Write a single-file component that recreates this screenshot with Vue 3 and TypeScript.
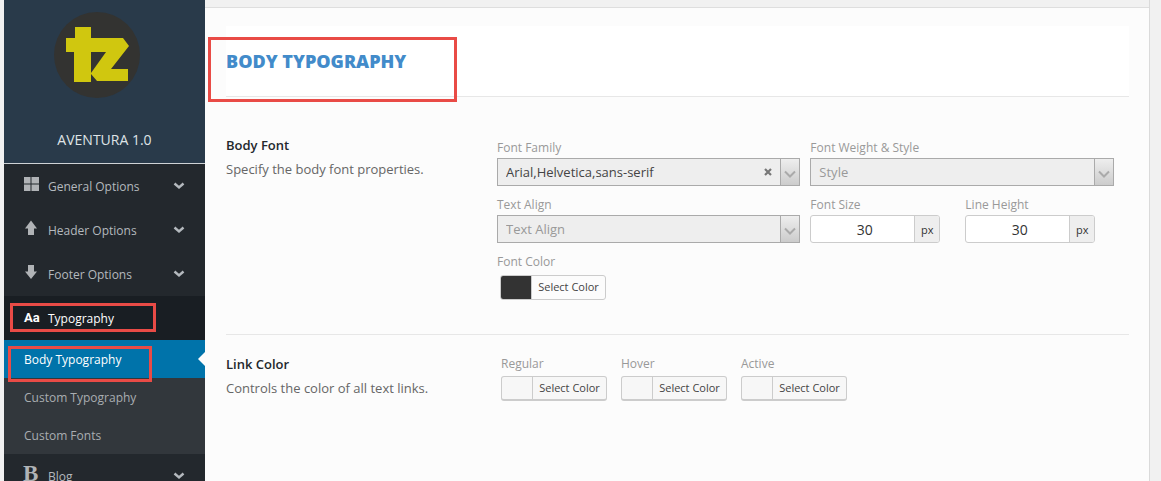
<script setup lang="ts">
import { ref } from 'vue'

interface MenuItem {
  label: string
  icon: 'grid' | 'up' | 'down' | 'type' | 'bold'
  active?: boolean
  children?: string[]
}

const menu: MenuItem[] = [
  { label: 'General Options', icon: 'grid' },
  { label: 'Header Options', icon: 'up' },
  { label: 'Footer Options', icon: 'down' },
  {
    label: 'Typography',
    icon: 'type',
    active: true,
    children: ['Body Typography', 'Custom Typography', 'Custom Fonts'],
  },
  { label: 'Blog', icon: 'bold' },
]

const currentPage = 'Body Typography'
const linkStates = ['Regular', 'Hover', 'Active']

const family = ref('Arial,Helvetica,sans-serif')
const weight = ref('')
const align = ref('')
const fontSize = ref('30')
const lineHeight = ref('30')
</script>

<template>
  <div class="page">
    <aside class="sidebar">
      <div class="brand">
        <svg class="logo" viewBox="0 0 86 86" aria-hidden="true">
          <circle cx="43" cy="43" r="43" fill="#333331" />
          <path
            fill="#d0c70f"
            d="M21 15H37V26H69L75 34L57 57H74V69H43L37 62V70H20V40H12V26H21Z"
          />
          <path fill="#333331" d="M37 40H52L37 61Z" />
        </svg>
        <span class="brand-name">AVENTURA 1.0</span>
      </div>
      <nav>
        <ul class="menu">
          <li v-for="item in menu" :key="item.label">
            <a href="#" class="menu-link" :class="{ active: item.active }">
              <span v-if="item.active" class="marker marker-menu"></span>
              <svg class="menu-icon" viewBox="0 0 16 16" aria-hidden="true">
                <path
                  v-if="item.icon === 'grid'"
                  d="M1 1h6.500v6.500H1zM8.500 1H16v6.500H8.500zM1 8.500h6.500V15H1zM8.500 8.500H16V15H8.500z"
                />
                <path v-else-if="item.icon === 'up'" d="M8 0.500L14 8.500H11V15H5V8.500H2Z" />
                <path v-else-if="item.icon === 'down'" d="M8 15L14 7.500H11V1H5V7.500H2Z" />
                <text v-else-if="item.icon === 'type'" class="glyph-type" x="1" y="14">Aa</text>
                <text v-else class="glyph-bold" x="0" y="15">B</text>
              </svg>
              <span class="menu-label">{{ item.label }}</span>
              <svg v-if="!item.active" class="caret" viewBox="0 0 12 8" aria-hidden="true">
                <path d="M1.500 1.500L6 5.500L10.500 1.500" />
              </svg>
            </a>
            <ul v-if="item.children" class="submenu">
              <li v-for="child in item.children" :key="child">
                <a href="#" class="sub-link" :class="{ current: child === currentPage }">
                  <span v-if="child === currentPage" class="marker marker-sub"></span>
                  {{ child }}
                </a>
              </li>
            </ul>
          </li>
        </ul>
      </nav>
    </aside>

    <div class="main">
      <div class="topbar"></div>
      <main class="panel">
        <header class="section-head">
          <span class="marker marker-head"></span>
          <h2>Body Typography</h2>
        </header>

        <section class="row">
          <div class="about">
            <h3>Body Font</h3>
            <p>Specify the body font properties.</p>
          </div>
          <div class="fields">
            <div class="field half">
              <label for="family">Font Family</label>
              <div class="select">
                <select id="family" v-model="family">
                  <option value=""></option>
                  <option>Arial,Helvetica,sans-serif</option>
                </select>
                <button type="button" class="clear" aria-label="Clear font family" @click="family = ''">
                  <svg viewBox="0 0 8 8"><path d="M1 1L7 7M7 1L1 7" /></svg>
                </button>
                <span class="arrow">
                  <svg viewBox="0 0 12 8"><path d="M1 1.500L6 6.500L11 1.500" /></svg>
                </span>
              </div>
            </div>
            <div class="field half">
              <label for="weight">Font Weight &amp; Style</label>
              <div class="select">
                <select id="weight" v-model="weight" :class="{ empty: !weight }">
                  <option value="">Style</option>
                  <option>Normal 400</option>
                  <option>Bold 700</option>
                </select>
                <span class="arrow">
                  <svg viewBox="0 0 12 8"><path d="M1 1.500L6 6.500L11 1.500" /></svg>
                </span>
              </div>
            </div>
            <div class="field half">
              <label for="align">Text Align</label>
              <div class="select">
                <select id="align" v-model="align" :class="{ empty: !align }">
                  <option value="">Text Align</option>
                  <option>Left</option>
                  <option>Center</option>
                  <option>Right</option>
                </select>
                <span class="arrow">
                  <svg viewBox="0 0 12 8"><path d="M1 1.500L6 6.500L11 1.500" /></svg>
                </span>
              </div>
            </div>
            <div class="half sizes">
              <div class="field">
                <label for="size">Font Size</label>
                <div class="measure">
                  <input id="size" v-model="fontSize" type="text" inputmode="numeric" />
                  <span class="unit">px</span>
                </div>
              </div>
              <div class="field">
                <label for="line">Line Height</label>
                <div class="measure">
                  <input id="line" v-model="lineHeight" type="text" inputmode="numeric" />
                  <span class="unit">px</span>
                </div>
              </div>
            </div>
            <div class="field half">
              <label for="font-color">Font Color</label>
              <button id="font-color" type="button" class="color filled">
                <span class="swatch"></span><span class="color-text">Select Color</span>
              </button>
            </div>
          </div>
        </section>

        <section class="row links">
          <div class="about">
            <h3>Link Color</h3>
            <p>Controls the color of all text links.</p>
          </div>
          <div class="states">
            <div v-for="state in linkStates" :key="state" class="field">
              <label :for="'link-' + state">{{ state }}</label>
              <button :id="'link-' + state" type="button" class="color">
                <span class="swatch"></span><span class="color-text">Select Color</span>
              </button>
            </div>
          </div>
        </section>
      </main>
    </div>
  </div>
</template>

<style>
body {
  margin: 0;
  background: #f1f1f1;
}
</style>

<style scoped>
* {
  box-sizing: border-box;
}
.page {
  display: flex;
  height: 100vh;
  padding: 0 11px 0 4px;
  overflow: hidden;
  background: #f1f1f1;
  font-family: "Open Sans", "Noto Sans", sans-serif;
  font-size: 13px;
  line-height: 20px;
}
.sidebar {
  flex: 0 0 201px;
  background: #23282d;
}
.brand {
  display: flex;
  flex-direction: column;
  align-items: center;
  height: 164px;
  padding-top: 12px;
  border-bottom: 1px solid #cfd3d6;
  background: #293a4a;
  color: #dfe3e6;
  font-size: 14px;
}
.logo {
  width: 86px;
  height: 86px;
  margin-right: 16px;
}
.brand-name {
  margin-top: 32px;
}
.menu,
.submenu {
  margin: 0;
  padding: 0;
  list-style: none;
}
.menu {
  font-size: 12px;
}
.menu-link {
  position: relative;
  display: flex;
  align-items: center;
  height: 44px;
  padding: 0 20px 0 19px;
  color: #b4b9be;
  text-decoration: none;
}
.menu-link.active {
  background: #191e23;
  color: #fff;
}
.menu-icon {
  width: 16px;
  height: 16px;
  margin: 0 9px 4px 0;
  fill: #b0b3b6;
  overflow: visible;
}
.active .menu-icon {
  fill: #fff;
}
.glyph-type {
  font: 700 13px Roboto, sans-serif;
}
.glyph-bold {
  font: 700 23px "Liberation Serif", serif;
}
.menu-label {
  flex: 1;
  padding-top: 1px;
}
.caret {
  width: 12px;
  height: 8px;
  fill: none;
  stroke: #b4b9be;
  stroke-width: 2.4;
}
.submenu {
  background: #32373c;
}
.sub-link {
  position: relative;
  display: block;
  height: 38px;
  padding: 10px 20px 8px;
  color: #a9adb1;
  line-height: 20px;
  text-decoration: none;
}
.sub-link.current {
  background: #0073aa;
  color: #fff;
}
.sub-link.current::after {
  content: "";
  position: absolute;
  right: 0;
  top: 12px;
  border: solid transparent;
  border-width: 7px 7px 7px 0;
  border-right-color: #fcfcfc;
}
.marker {
  position: absolute;
  z-index: 2;
  border: 3px solid #e94b46;
  pointer-events: none;
}
.marker-menu {
  inset: 7px 49px 8px 6px;
}
.marker-sub {
  inset: 6px 53px -4px 4px;
}
.marker-head {
  top: 11px;
  left: -18px;
  width: 249px;
  height: 65px;
}
.main {
  display: flex;
  flex: 1;
  flex-direction: column;
  min-width: 0;
  border-right: 1px solid #dadada;
  background: #fcfcfc;
}
.topbar {
  flex: 0 0 8px;
  border-bottom: 1px solid #dedede;
  background: #f1f1f1;
}
.panel {
  padding: 18px 20px 0 21px;
}
.section-head {
  position: relative;
  height: 71px;
  padding-top: 23px;
  border-bottom: 1px solid #e7e7e7;
  background: #fff;
}
h2 {
  margin: 0;
  color: #428bca;
  font-size: 18px;
  font-weight: 800;
  line-height: 24px;
  text-transform: uppercase;
}
.row {
  display: grid;
  grid-template-columns: 271px 1fr;
  padding: 38px 0 34px;
  border-bottom: 1px solid #e7e7e7;
}
.row.links {
  padding-top: 19px;
  border-bottom: 0;
}
h3 {
  margin: 0;
  color: #23282d;
  font-size: 13px;
  font-weight: 600;
  line-height: 20px;
}
p {
  margin: 4px 0 0;
  color: #666;
}
.fields {
  display: flex;
  flex-wrap: wrap;
  gap: 9px 10px;
  padding-top: 3px;
}
.half {
  width: 48%;
}
.field {
  display: flex;
  flex-direction: column;
}
label {
  color: #999;
  font-size: 12px;
  line-height: 20px;
}
.select {
  position: relative;
  display: flex;
  height: 28px;
  border: 1px solid #aaa;
  background: #eee;
}
select {
  flex: 1;
  min-width: 0;
  padding: 0 8px;
  border: 0;
  outline: 0;
  appearance: none;
  background: transparent;
  color: #444;
  font: 13px "Open Sans", "Noto Sans", sans-serif;
}
select.empty {
  color: #999;
}
.clear {
  width: 8px;
  margin: 0 8px 0 0;
  padding: 0;
  border: 0;
  background: transparent;
}
.clear svg {
  display: block;
  width: 8px;
  height: 8px;
  stroke: #777;
  stroke-width: 2.2;
}
.arrow {
  display: grid;
  place-items: center;
  width: 19px;
  border-left: 1px solid #aaa;
  background: linear-gradient(#eee, #ccc);
  pointer-events: none;
}
.arrow svg {
  width: 12px;
  height: 8px;
  margin-top: 4px;
  fill: none;
  stroke: #aaa;
  stroke-width: 2;
}
.sizes {
  display: flex;
  gap: 25px;
}
.measure {
  display: flex;
  width: 130px;
  height: 28px;
  border: 1px solid #ccc;
  border-radius: 3px;
  background: #fff;
  overflow: hidden;
}
input {
  flex: 1;
  min-width: 0;
  padding: 0 0 0 4px;
  border: 0;
  outline: 0;
  background: transparent;
  color: #333;
  font: 14px "Open Sans", "Noto Sans", sans-serif;
  text-align: center;
}
.unit {
  width: 25px;
  border-left: 1px solid #ccc;
  background: #eee;
  color: #333;
  font-size: 11px;
  line-height: 28px;
  text-align: center;
}
.states {
  display: flex;
  gap: 14px;
  padding-left: 4px;
}
.color {
  display: flex;
  width: 106px;
  height: 25px;
  margin: 3px 0 0 3px;
  padding: 0;
  overflow: hidden;
  border: 1px solid #ccc;
  border-bottom-width: 2px;
  border-radius: 3px;
  background: #f7f7f7;
  color: #444;
  font: 11px "Open Sans", "Noto Sans", sans-serif;
}
.color.filled {
  border-bottom-width: 1px;
  background: #fcfcfc;
}
.swatch {
  align-self: stretch;
  width: 31px;
  border-right: 1px solid #ccc;
}
.filled .swatch {
  background: #333;
}
.color-text {
  flex: 1;
  line-height: 22px;
  text-align: center;
}
.states .color {
  margin: 2px 0 0 0;
}
</style>
